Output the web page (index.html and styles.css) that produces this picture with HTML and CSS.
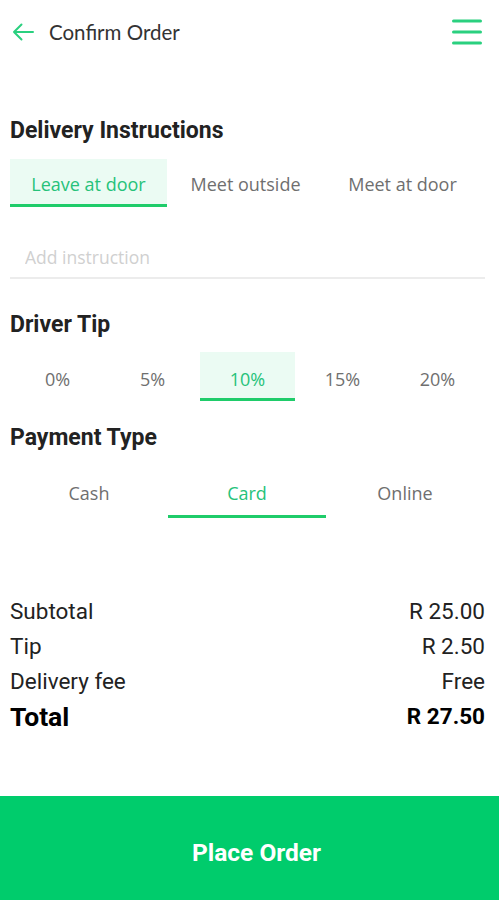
FILE: index.html
```html
<!DOCTYPE html>
<html lang="en">
<head>
    <meta charset="UTF-8">
    <meta name="viewport" content="width=device-width, initial-scale=1.0">
    <title>Confirm Order</title>
    <link rel="stylesheet" href="styles.css">
</head>
<body>
    <!-- top bar -->
    <div class="topbar">
        <div class="topbar-left">
            <svg class="back" width="22" height="18" viewBox="0 0 22 18">
                <path d="M21 9H2M9.5 1.5L2 9l7.5 7.5" fill="none" stroke="#2ad07f" stroke-width="2" stroke-linecap="round" stroke-linejoin="round"/>
            </svg>
            <span class="title">Confirm Order</span>
        </div>
        <svg class="menu" width="30" height="26" viewBox="0 0 30 26">
            <path d="M1.5 2H28.5M1.5 13H28.5M1.5 24H28.5" stroke="#2ad07f" stroke-width="3" stroke-linecap="round"/>
        </svg>
    </div>

    <div class="content">
        <h2 class="section first">Delivery Instructions</h2>
        <div class="tabs tabs-instr">
            <div class="tab active filled">Leave at door</div>
            <div class="tab">Meet outside</div>
            <div class="tab">Meet at door</div>
        </div>
        <input class="instruction" type="text" placeholder="Add instruction">

        <h2 class="section tip-title">Driver Tip</h2>
        <div class="tabs tabs-tip">
            <div class="tab">0%</div>
            <div class="tab">5%</div>
            <div class="tab active filled">10%</div>
            <div class="tab">15%</div>
            <div class="tab">20%</div>
        </div>

        <h2 class="section pay-title">Payment Type</h2>
        <div class="tabs tabs-pay">
            <div class="tab">Cash</div>
            <div class="tab active">Card</div>
            <div class="tab">Online</div>
        </div>

        <!-- totals -->
        <div class="summary">
            <div class="line"><span>Subtotal</span><span>R 25.00</span></div>
            <div class="line"><span>Tip</span><span>R 2.50</span></div>
            <div class="line"><span>Delivery fee</span><span>Free</span></div>
            <div class="line total"><span>Total</span><span>R 27.50</span></div>
        </div>
    </div>

    <button class="place">Place Order</button>
</body>
</html>
```

FILE: styles.css
```css
body, html {
    margin: 0;
    padding: 0;
    background-color: #fff;
    font-family: "Open Sans", Arial, sans-serif;
}

/* top bar */
.topbar {
    height: 64px;
    display: flex;
    align-items: center;
    justify-content: space-between;
    padding: 0 17px 0 12px;
}

.topbar-left {
    display: flex;
    align-items: center;
    gap: 15px;
}

.back {
    display: block;
}

.title {
    font-family: Lato, "Noto Sans", sans-serif;
    font-size: 20.5px;
    color: #333;
}

.menu {
    display: block;
}

/* content */
.content {
    padding: 0 14px 0 10px;
}

.section {
    margin: 0;
    font-family: Roboto, Arial, sans-serif;
    font-weight: bold;
    font-size: 23px;
    line-height: 24px;
    color: #222;
}

.section.first {
    margin-top: 55px;
}

.tip-title {
    margin-top: 34px;
}

.pay-title {
    margin-top: 25px;
}

.tabs {
    display: grid;
}

.tabs-instr {
    grid-template-columns: repeat(3, 157px);
    margin-top: 16px;
}

.tabs-tip {
    grid-template-columns: repeat(5, 95px);
    margin-top: 15px;
}

.tabs-pay {
    grid-template-columns: repeat(3, 158px);
    margin-top: 16px;
}

.tab {
    text-align: center;
    font-size: 18px;
    line-height: 24px;
    color: #6f6f6f;
    padding: 13px 0 8px;
    border-bottom: 3px solid transparent;
}

.tabs-tip .tab {
    padding: 15px 0 7px;
}

.tabs-pay .tab {
    padding: 15px 0 10px;
}

.tab.active {
    color: #26c27a;
    border-bottom-color: #1fcc6a;
}

.tab.filled {
    background-color: #ebfbf3;
}

.instruction {
    display: block;
    width: 100%;
    box-sizing: border-box;
    margin-top: 29px;
    height: 43px;
    border: none;
    border-bottom: 2px solid #ececec;
    padding: 0 0 0 15px;
    font-family: "Open Sans", Arial, sans-serif;
    font-size: 17.5px;
    outline: none;
}

.instruction::placeholder {
    color: #d0d0d0;
}

/* totals */
.summary {
    margin-top: 76px;
    font-family: Roboto, Arial, sans-serif;
    color: #222;
}

.line {
    display: flex;
    justify-content: space-between;
    font-size: 22.5px;
    line-height: 35px;
}

.line.total {
    font-size: 26.5px;
    font-weight: bold;
    color: #000;
}

.line.total span:last-child {
    font-size: 22.5px;
}

.place {
    display: block;
    width: 100%;
    height: 104px;
    margin-top: 62px;
    padding: 8px 0 0 14px;
    border: none;
    background-color: #00cc6c;
    color: #fff;
    font-family: Roboto, Arial, sans-serif;
    font-weight: bold;
    font-size: 24.5px;
    cursor: pointer;
}
```
